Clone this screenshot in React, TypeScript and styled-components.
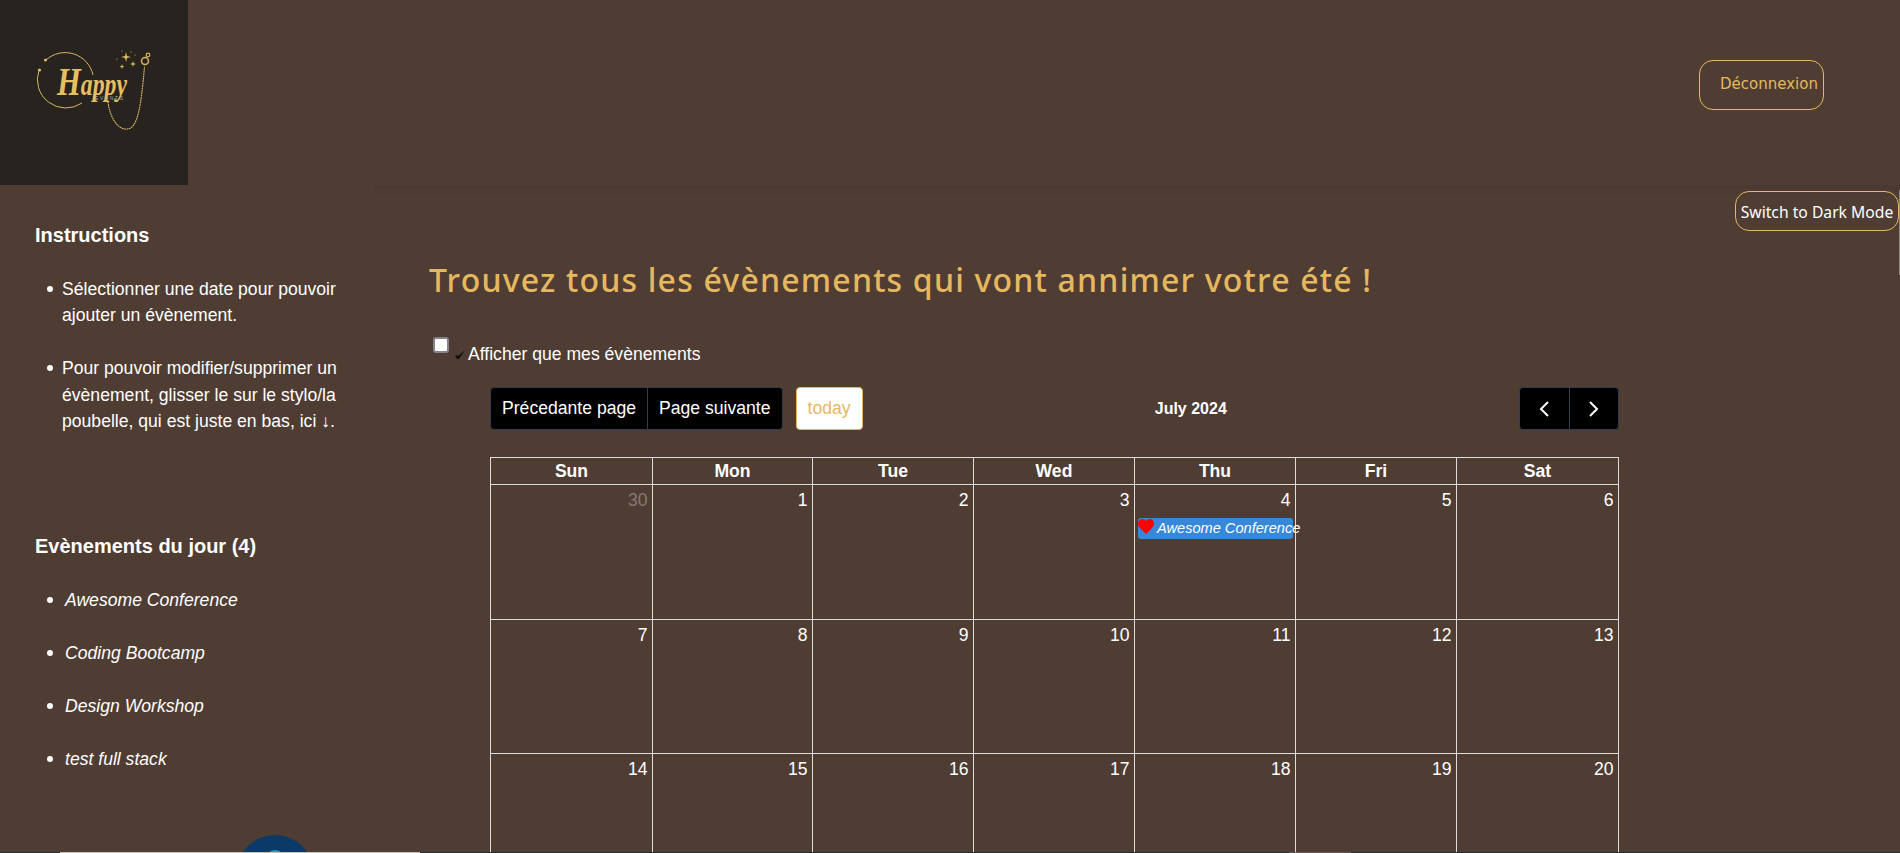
import React from "react";
import styled, { createGlobalStyle } from "styled-components";

const GlobalStyle = createGlobalStyle`
  html, body {
    margin: 0;
    padding: 0;
    height: 853px;
    overflow: hidden;
    background: #4f3d34;
    font-family: "Liberation Sans", Arial, sans-serif;
    color: #fff;
  }
`;

const weeks = [
    [30, 1, 2, 3, 4, 5, 6],
    [7, 8, 9, 10, 11, 12, 13],
    [14, 15, 16, 17, 18, 19, 20],
    [21, 22, 23, 24, 25, 26, 27],
];
const dayNames = ["Sun", "Mon", "Tue", "Wed", "Thu", "Fri", "Sat"];
const todayEvents = ["Awesome Conference", "Coding Bootcamp", "Design Workshop", "test full stack"];

const Logo = () => (
    <svg width="188" height="185" viewBox="0 0 188 185">
        <g fill="none" stroke="#d9b566" strokeWidth="1">
            <path d="M46 60 A28.5 28.5 0 0 1 93 75" />
            <path d="M39 70 A28.5 28.5 0 0 0 82 103" />
            <path
                d="M108 102 C110 118 118 130 127 129 C138 129 141 105 144.5 67"
                strokeDasharray="0.8 1.6"
                strokeWidth="1.2"
                strokeLinecap="round"
            />
            <circle cx="145" cy="61" r="3.5" strokeWidth="1.5" />
            <circle cx="148" cy="55" r="1.8" strokeWidth="1.2" />
        </g>
        <g fill="#e0b95e">
            <circle cx="45.5" cy="60" r="1.6" />
            <circle cx="39.5" cy="70" r="1.6" />
            <path d="M126 52 l1 4 4 1 -4 1 -1 4 -1 -4 -4 -1 4 -1z" />
            <path d="M133 61 l.7 2.3 2.3 .7 -2.3 .7 -.7 2.3 -.7 -2.3 -2.3 -.7 2.3 -.7z" />
            <path d="M122 64 l.6 2 2 .6 -2 .6 -.6 2 -.6 -2 -2 -.6 2 -.6z" />
            <circle cx="122" cy="51" r=".6" />
            <circle cx="131" cy="52" r=".6" />
            <circle cx="135" cy="55" r=".6" />
            <circle cx="117" cy="59" r=".6" />
        </g>
        <LogoWord x="57" y="95" textLength="70" lengthAdjust="spacingAndGlyphs">
            <LogoCap>H</LogoCap>appy
        </LogoWord>
        <LogoSub x="95" y="100">EVENTS</LogoSub>
    </svg>
);

const Chevron = ({ dir }: { dir: "left" | "right" }) => (
    <svg width="12" height="16" viewBox="0 0 12 16">
        <path
            d={dir === "left" ? "M10 1 L3 8 L10 15" : "M2 1 L9 8 L2 15"}
            fill="none"
            stroke="#fff"
            strokeWidth="2"
        />
    </svg>
);

export default function App() {
    return (
        <Page>
            <GlobalStyle />
            <Header>
                <LogoBox>
                    <Logo />
                </LogoBox>
                <LogoutButton>Déconnexion</LogoutButton>
            </Header>

            <Body>
                <Sidebar>
                    <SideTitle>Instructions</SideTitle>
                    <HelpList>
                        <HelpItem>Sélectionner une date pour pouvoir ajouter un évènement.</HelpItem>
                        <HelpItem>
                            Pour pouvoir modifier/supprimer un évènement, glisser le sur le stylo/la poubelle, qui est
                            juste en bas, ici ↓.
                        </HelpItem>
                    </HelpList>

                    <EventsTitle>Evènements du jour (4)</EventsTitle>
                    <EventList>
                        {todayEvents.map((name) => (
                            <EventItem key={name}>{name}</EventItem>
                        ))}
                    </EventList>
                    <RoundTool>
                        <RoundToolInner />
                    </RoundTool>
                </Sidebar>

                <Main>
                    <ThemeRow>
                        <ThemeButton>Switch to Dark Mode</ThemeButton>
                    </ThemeRow>
                    <PageTitle>Trouvez tous les évènements qui vont annimer votre été !</PageTitle>

                    <FilterRow>
                        <FilterBox type="checkbox" />
                        <TickMark width="11" height="9" viewBox="0 0 11 9">
                            <path d="M0 6 L2 5 L3 6 L10 0 L4 9 L2 9z" fill="#111" />
                        </TickMark>
                        <FilterLabel>Afficher que mes évènements</FilterLabel>
                    </FilterRow>

                    <Calendar>
                        <Toolbar>
                            <ToolGroup>
                                <BtnGroup>
                                    <CalButton>Précedante page</CalButton>
                                    <CalButton>Page suivante</CalButton>
                                </BtnGroup>
                                <TodayButton>today</TodayButton>
                            </ToolGroup>
                            <MonthTitle>July 2024</MonthTitle>
                            <BtnGroup>
                                <ArrowButton>
                                    <Chevron dir="left" />
                                </ArrowButton>
                                <ArrowButton>
                                    <Chevron dir="right" />
                                </ArrowButton>
                            </BtnGroup>
                        </Toolbar>

                        <MonthTable>
                            <thead>
                                <tr>
                                    {dayNames.map((d) => (
                                        <DayHead key={d}>{d}</DayHead>
                                    ))}
                                </tr>
                            </thead>
                            <tbody>
                                {weeks.map((week) => (
                                    <tr key={week[0]}>
                                        {week.map((day) => (
                                            <DayCell key={day}>
                                                <DayNumber $other={day === 30}>{day}</DayNumber>
                                                {day === 4 && (
                                                    <CalEvent>
                                                        <Heart viewBox="0 0 16 15" width="16" height="15">
                                                            <path
                                                                d="M8 15 C3 10 0 8 0 4.4 C0 1.8 2 0 4.2 0 C5.8 0 7.2 .8 8 2.2 C8.8 .8 10.2 0 11.8 0 C14 0 16 1.8 16 4.4 C16 8 13 10 8 15z"
                                                                fill="#f00"
                                                            />
                                                        </Heart>
                                                        <CalEventText>Awesome Conference</CalEventText>
                                                    </CalEvent>
                                                )}
                                            </DayCell>
                                        ))}
                                    </tr>
                                ))}
                            </tbody>
                        </MonthTable>
                    </Calendar>
                </Main>
            </Body>

            <BottomEdge>
                <EdgePart $w={60} $c="#22323a" />
                <EdgePart $w={360} $c="#c9c3bd" />
                <EdgePart $w={869} $c="#22323a" />
                <EdgePart $w={62} $c="#5c5c5c" />
                <EdgePart $w={549} $c="#22323a" />
            </BottomEdge>
            <SideEdge />
        </Page>
    );
}

const Page = styled.div`
  position: relative;
  width: 1900px;
  height: 853px;
  overflow: hidden;
  background: #4f3d34;
`;

const Header = styled.header`
  display: flex;
  align-items: center;
  justify-content: space-between;
  height: 185px;
  padding-right: 76px;
`;

const LogoBox = styled.div`
  width: 188px;
  height: 185px;
  background: #27231e;
`;

const LogoWord = styled.text`
  font-family: "Liberation Serif", serif;
  font-style: italic;
  font-weight: 700;
  font-size: 31px;
  fill: #e6bf62;
`;

const LogoCap = styled.tspan`
  font-size: 40px;
`;

const LogoSub = styled.text`
  font-family: "Liberation Sans", sans-serif;
  font-size: 5px;
  letter-spacing: 1.6px;
  fill: #a9a6a2;
`;

const LogoutButton = styled.button`
  box-sizing: border-box;
  width: 125px;
  height: 50px;
  margin-top: -15px;
  padding: 0 5px 2px 20px;
  background: transparent;
  border: 1px solid #e5b85f;
  border-radius: 14px;
  color: #e5b85f;
  font-family: "DejaVu Sans", sans-serif;
  font-size: 15px;
  text-align: left;
  white-space: nowrap;
`;

const Body = styled.div`
  display: flex;
  align-items: flex-start;
`;

const Sidebar = styled.aside`
  box-sizing: border-box;
  width: 375px;
  padding: 39px 0 0 35px;
`;

const SideTitle = styled.h3`
  margin: 0;
  font-size: 20px;
  line-height: 23px;
  font-weight: 700;
`;

const HelpList = styled.ul`
  margin: 29px 0 0;
  padding: 0 0 0 27px;
  width: 280px;
  list-style: none;
`;

const HelpItem = styled.li`
  position: relative;
  font-size: 17.6px;
  line-height: 26.4px;
  margin-bottom: 26.4px;

  &::before {
    content: "";
    position: absolute;
    top: 10px;
    left: -15.5px;
    width: 6px;
    height: 6px;
    border-radius: 50%;
    background: #fff;
  }
`;

const EventsTitle = styled(SideTitle)`
  margin-top: 100.4px;
`;

const EventList = styled.ul`
  margin: 29.3px 0 0;
  padding: 0 0 0 30px;
  list-style: none;
`;

const EventItem = styled(HelpItem)`
  font-style: italic;

  &::before {
    left: -18.5px;
  }
`;

const RoundTool = styled.div`
  position: relative;
  width: 78px;
  height: 78px;
  margin: 63.4px 0 0 201px;
  border-radius: 50%;
  background: #0a3a68;
`;

const RoundToolInner = styled.div`
  position: absolute;
  top: 15px;
  left: 29px;
  width: 20px;
  height: 20px;
  border-radius: 50%;
  background: #1c9ad6;
`;

const Main = styled.main`
  flex: 1;
  min-width: 0;
  height: 668px;
  padding: 6px 0 0 54px;
  box-shadow: inset 0 12px 10px -8px rgba(0, 0, 0, 0.07);
`;

const ThemeRow = styled.div`
  display: flex;
  justify-content: flex-end;
  padding-right: 1px;
`;

const ThemeButton = styled.button`
  box-sizing: border-box;
  width: 164px;
  height: 40px;
  padding: 1px 0 0;
  background: transparent;
  border: 1px solid #e5b85f;
  border-radius: 14px;
  color: #fff;
  font-family: "Noto Sans", sans-serif;
  font-size: 15.7px;
  white-space: nowrap;
`;

const PageTitle = styled.h1`
  margin: 27px 0 0;
  font-family: "Noto Sans", sans-serif;
  font-size: 32px;
  line-height: 44px;
  font-weight: 500;
  letter-spacing: 1.2px;
  color: #e5b85f;
  white-space: nowrap;
`;

const FilterRow = styled.div`
  display: flex;
  align-items: flex-start;
  margin-top: 35px;
  padding-left: 4px;
  height: 31px;
`;

const FilterBox = styled.input`
  appearance: none;
  box-sizing: border-box;
  width: 16px;
  height: 16px;
  margin: 0;
  background: #fff;
  border: 2px solid #85828e;
  border-radius: 3px;
`;

const TickMark = styled.svg`
  margin: 13px 2px 0 6px;
`;

const FilterLabel = styled.span`
  margin-top: 8px;
  font-size: 17.6px;
  line-height: 18px;
`;

const Calendar = styled.section`
  width: 1129px;
  margin: 19px 0 0 61px;
`;

const Toolbar = styled.div`
  display: flex;
  align-items: center;
  justify-content: space-between;
  margin-bottom: 27px;
`;

const ToolGroup = styled.div`
  display: flex;
  align-items: center;
  gap: 13px;
`;

const BtnGroup = styled.div`
  display: flex;
`;

const CalButton = styled.button`
  box-sizing: border-box;
  height: 43px;
  padding: 0 11px;
  background: #000;
  border: 1px solid #2c3e50;
  color: #fff;
  font-family: inherit;
  font-size: 17.6px;
  white-space: nowrap;

  &:first-child {
    border-radius: 4px 0 0 4px;
  }
  &:last-child {
    border-radius: 0 4px 4px 0;
    margin-left: -1px;
  }
`;

const ArrowButton = styled(CalButton)`
  display: flex;
  align-items: center;
  justify-content: center;
  width: 50.5px;
`;

const TodayButton = styled.button`
  box-sizing: border-box;
  width: 67px;
  height: 43px;
  padding: 0;
  background: #fff;
  border: 1px solid #e5b85f;
  border-radius: 4px;
  color: #e5b85f;
  font-family: inherit;
  font-size: 17.6px;
`;

const MonthTitle = styled.h2`
  margin: 0;
  font-size: 16px;
  font-weight: 700;
`;

const MonthTable = styled.table`
  width: 1128px;
  table-layout: fixed;
  border-collapse: collapse;
`;

const DayHead = styled.th`
  box-sizing: border-box;
  width: 161px;
  height: 27px;
  padding: 0;
  border: 1px solid #ddd;
  font-size: 17.6px;
  font-weight: 700;
  line-height: 20px;

  &:first-child {
    width: 162px;
  }
  &:nth-child(2) {
    width: 160px;
  }
  &:last-child {
    width: 162px;
  }
`;

const DayCell = styled.td`
  height: 133.5px;
  padding: 0;
  border: 1px solid #ddd;
  vertical-align: top;
`;

const DayNumber = styled.div<{ $other: boolean }>`
  padding: 5px 4.5px 0 0;
  text-align: right;
  font-size: 17.6px;
  line-height: 20px;
  opacity: ${(p) => (p.$other ? 0.3 : 1)};
`;

const CalEvent = styled.div`
  display: flex;
  align-items: flex-start;
  height: 21px;
  margin: 8px 2px 0 3px;
  background: #3788d8;
  border-radius: 3px;
  white-space: nowrap;
`;

const Heart = styled.svg`
  flex: none;
  margin-top: 1px;
`;

const CalEventText = styled.span`
  margin-left: 3px;
  font-size: 14.6px;
  font-style: italic;
  line-height: 21px;
`;

const BottomEdge = styled.div`
  position: absolute;
  left: 0;
  bottom: 0;
  display: flex;
  width: 1900px;
  height: 1px;
`;

const EdgePart = styled.div<{ $w: number; $c: string }>`
  width: ${(p) => p.$w}px;
  background: ${(p) => p.$c};
`;

const SideEdge = styled.div`
  position: absolute;
  top: 190px;
  right: 0;
  width: 1px;
  height: 85px;
  background: #8f8a85;
`;
